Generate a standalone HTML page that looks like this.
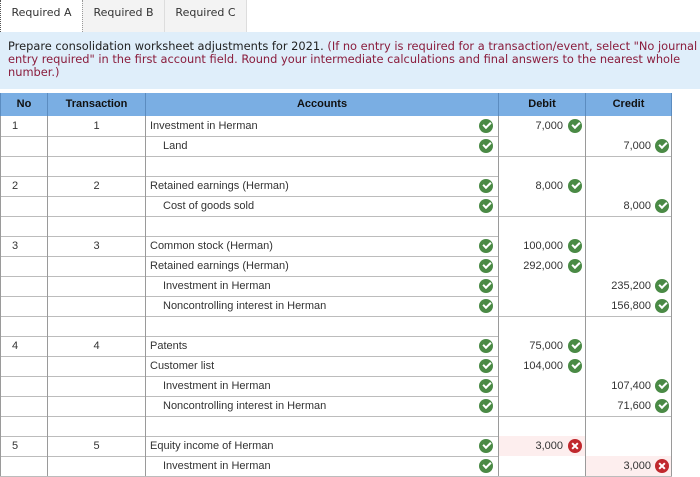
<!DOCTYPE html>
<html><head><style>
body{margin:0;width:700px;height:477px;background:#fff;position:relative;overflow:hidden;font-family:"Liberation Sans",Arial,sans-serif}
.tab{position:absolute;top:0;height:32px;font-family:"DejaVu Sans",Verdana,sans-serif;font-size:11px;color:#333;line-height:26px;text-align:center;box-sizing:border-box}
.box{position:absolute;left:0;top:32px;width:700px;height:57px;background:#dfeefa;font-family:"DejaVu Sans",Verdana,sans-serif;font-size:11.4px;line-height:13px;color:#222;padding:8px 0 0 8px;box-sizing:border-box;white-space:nowrap}
.r{color:#8a1c3c}
.row{position:absolute;left:0;width:672px;height:20px;border-bottom:1px solid #bcbcbc;font-size:11px;color:#333}
.c{position:absolute;top:0;height:20px;line-height:20px;border-left:1px solid #9a9a9a;box-sizing:border-box}
.ok,.x{position:absolute;width:14px;height:14px;border-radius:50%;top:3px}
.ok{background:#4a8a45}
.x{background:#c0282d}
.ok:after{content:"";position:absolute;left:4px;top:3px;width:6px;height:3px;border-left:2px solid #fff;border-bottom:2px solid #fff;transform:rotate(-45deg)}
.x:before,.x:after{content:"";position:absolute;left:3px;top:6px;width:8px;height:2px;background:#fff;transform:rotate(45deg)}
.x:after{transform:rotate(-45deg)}
.hd{position:absolute;top:93px;left:0;width:672px;height:23px;background:#7aaee3;font-size:11px;font-weight:bold;color:#111}
.hd div{position:absolute;top:0;height:23px;line-height:22px;text-align:center;border-left:1px solid #5b8cc0;box-sizing:border-box}
</style></head><body>
<div class="tab" style="left:0;width:82px;background:#fff;border-left:1px dotted #555">Required A</div>
<div class="tab" style="left:82px;width:83px;background:#f3f3f3;border-left:1px dotted #999;border-right:1px solid #ddd">Required B</div>
<div class="tab" style="left:165px;width:82px;background:#f3f3f3;border-right:1px solid #ddd">Required C</div>
<div class="box">Prepare consolidation worksheet adjustments for 2021. <span class="r">(If no entry is required for a transaction/event, select "No journal<br>entry required" in the first account field. Round your intermediate calculations and final answers to the nearest whole<br>number.)</span></div>
<div class="hd">
<div style="left:0;width:47px">No</div>
<div style="left:47px;width:98px">Transaction</div>
<div style="left:145px;width:353px">Accounts</div>
<div style="left:498px;width:87px">Debit</div>
<div style="left:585px;width:87px;border-right:1px solid #5b8cc0">Credit</div>
</div>
<div id="rows"></div>
<script>
var R=[
["1","1","Investment in Herman",0,"7,000","",0],
["","","Land",1,"","7,000",0],
null,
["2","2","Retained earnings (Herman)",0,"8,000","",0],
["","","Cost of goods sold",1,"","8,000",0],
null,
["3","3","Common stock (Herman)",0,"100,000","",0],
["","","Retained earnings (Herman)",0,"292,000","",0],
["","","Investment in Herman",1,"","235,200",0],
["","","Noncontrolling interest in Herman",1,"","156,800",0],
null,
["4","4","Patents",0,"75,000","",0],
["","","Customer list",0,"104,000","",0],
["","","Investment in Herman",1,"","107,400",0],
["","","Noncontrolling interest in Herman",1,"","71,600",0],
null,
["5","5","Equity income of Herman",0,"3,000","",1],
["","","Investment in Herman",1,"","3,000",1]];
var h="";
R.forEach(function(r,i){
var t=116+i*20;
h+='<div class="row" style="top:'+t+'px">';
if(!r){h+='<div class="c" style="left:0;width:47px"></div><div class="c" style="left:47px;width:98px"></div><div class="c" style="left:145px;width:353px"></div><div class="c" style="left:498px;width:87px"></div><div class="c" style="left:585px;width:87px;border-right:1px solid #9a9a9a"></div></div>';return;}
var ic=r[6]?'x':'ok',bg=r[6]?'#fdeeee':'#fff';
h+='<div class="c" style="left:0;width:47px;padding-left:11px">'+r[0]+'</div>';
h+='<div class="c" style="left:47px;width:98px;text-align:center">'+r[1]+'</div>';
h+='<div class="c" style="left:145px;width:353px;padding-left:'+(r[3]?17:4)+'px">'+r[2]+'<span class="ok" style="left:333px"></span></div>';
h+='<div class="c" style="left:498px;width:87px;background:'+(r[4]&&r[6]?bg:'#fff')+'">'+(r[4]?'<span style="position:absolute;right:22px">'+r[4]+'</span><span class="'+ic+'" style="left:69px"></span>':'')+'</div>';
h+='<div class="c" style="left:585px;width:87px;border-right:1px solid #9a9a9a;background:'+(r[5]&&r[6]?bg:'#fff')+'">'+(r[5]?'<span style="position:absolute;right:20px">'+r[5]+'</span><span class="'+ic+'" style="left:69px"></span>':'')+'</div>';
h+='</div>';});
document.getElementById('rows').innerHTML=h;
</script>
</body></html>
